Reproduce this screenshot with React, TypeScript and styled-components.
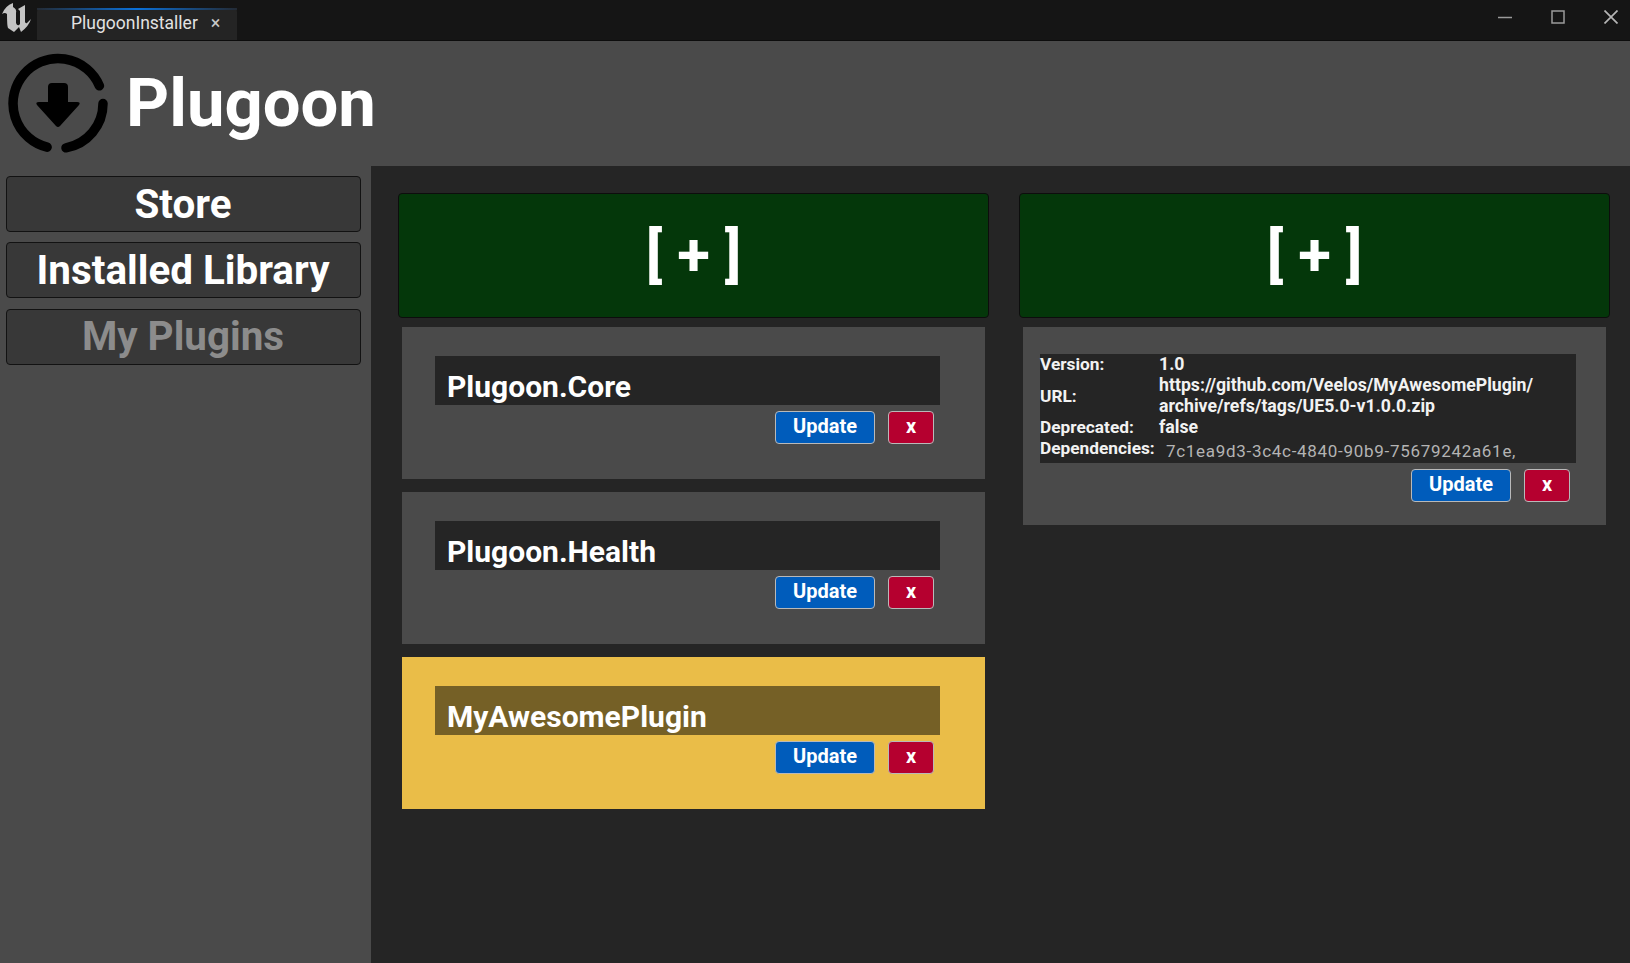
import * as React from "react";
import styled, { createGlobalStyle } from "styled-components";

const GlobalStyle = createGlobalStyle`
  html, body {
    margin: 0;
    padding: 0;
    height: 100%;
    overflow: hidden;
    background: #4a4a4a;
    font-family: Roboto, "Liberation Sans", sans-serif;
  }
  #root {
    height: 100%;
  }
`;

const Page = styled.div`
  display: flex;
  flex-direction: column;
  width: 1630px;
  height: 963px;
  overflow: hidden;
  background: #4a4a4a;
`;

const TitleBar = styled.div`
  display: flex;
  align-items: flex-end;
  height: 40px;
  flex: none;
  background: #151515;
  border-bottom: 1px solid #0c0c0c;
`;

const LogoSlot = styled.div`
  width: 37px;
  height: 40px;
  flex: none;
`;

const Tab = styled.div`
  display: flex;
  align-items: center;
  width: 200px;
  height: 32px;
  box-sizing: border-box;
  padding: 0 0 5px 34px;
  background: #242424;
  border-radius: 4px 4px 0 0;
  border-top: 2px solid transparent;
  border-image: linear-gradient(90deg, #242a33, #0a70d8 50%, #242a33) 1;
  border-left: 0;
  border-right: 0;
  border-bottom: 0;
  color: #e2e2e2;
  font-size: 17.5px;
`;

const TabClose = styled.span`
  margin-left: 13px;
  font-size: 18px;
  color: #c8c8c8;
`;

const WindowButtons = styled.div`
  display: flex;
  align-items: center;
  gap: 39px;
  margin-left: auto;
  height: 34px;
  align-self: flex-start;
  padding-right: 12px;
  color: #9a9a9a;
`;

const Header = styled.header`
  display: flex;
  align-items: center;
  gap: 17px;
  height: 125px;
  flex: none;
  padding-left: 6px;
  box-sizing: border-box;
`;

const Brand = styled.h1`
  margin: 0;
  color: #fff;
  font-size: 67px;
  font-weight: 700;
  line-height: 1;
`;

const Body = styled.div`
  display: flex;
  flex: 1;
  min-height: 0;
`;

const Sidebar = styled.nav`
  display: flex;
  flex-direction: column;
  gap: 10.4px;
  width: 371px;
  flex: none;
  box-sizing: border-box;
  padding: 10px 10px 0 6px;
`;

const NavButton = styled.div<{ $dim?: boolean }>`
  display: flex;
  align-items: center;
  justify-content: center;
  height: 56px;
  box-sizing: border-box;
  padding-right: 1px;
  background: #383838;
  border: 1px solid #121212;
  border-radius: 4px;
  color: ${(p) => (p.$dim ? "#8c8c8c" : "#fff")};
  font-size: 40.4px;
  font-weight: 700;
`;

const Main = styled.main`
  flex: 1;
  display: grid;
  grid-template-columns: 591px 591px;
  column-gap: 30px;
  align-items: start;
  padding: 27px 0 0 27px;
  background: #252525;
`;

const Column = styled.div`
  display: flex;
  flex-direction: column;
`;

const AddButton = styled.div`
  display: flex;
  align-items: center;
  justify-content: center;
  height: 125px;
  box-sizing: border-box;
  margin-bottom: 9px;
  padding-bottom: 3px;
  background: #04370a;
  border: 1px solid #0d0d0d;
  border-radius: 4px;
  color: #fff;
  font-size: 60px;
  font-weight: 700;
`;

const Card = styled.section<{ $selected?: boolean }>`
  margin: 0 4px 13px;
  height: 152px;
  box-sizing: border-box;
  padding: 29px 15px 0 33px;
  background: ${(p) => (p.$selected ? "#eabd48" : "#4a4a4a")};
`;

const DetailCard = styled(Card)`
  height: 198px;
  padding: 27px 36px 0 17px;
`;

const NameBar = styled.div<{ $selected?: boolean }>`
  height: 49px;
  margin-right: 30px;
  box-sizing: border-box;
  padding-left: 12px;
  background: ${(p) => (p.$selected ? "#756026" : "#252525")};
  color: #fff;
  font-size: 30px;
  font-weight: 700;
  line-height: 62px;
  overflow: hidden;
`;

const Actions = styled.div`
  display: flex;
  justify-content: flex-end;
  gap: 13px;
  margin: 6px 36px 0 0;
`;

const ActionButton = styled.div<{ $danger?: boolean }>`
  display: flex;
  align-items: center;
  justify-content: center;
  width: ${(p) => (p.$danger ? "46px" : "100px")};
  height: 33px;
  box-sizing: border-box;
  padding-bottom: 3px;
  background: ${(p) => (p.$danger ? "#b5002f" : "#005cbb")};
  border: 1px solid #b9b9b9;
  border-radius: 4px;
  color: #fff;
  font-size: 20px;
  font-weight: 700;
`;

const DetailTable = styled.div`
  display: grid;
  grid-template-columns: 119px 1fr;
  grid-auto-rows: 21px;
  width: 536px;
  height: 109px;
  background: #252525;
  color: #f2f2f2;
  font-size: 17.3px;
  font-weight: 700;
  line-height: 21px;
`;

const DetailLabel = styled.div<{ $tall?: boolean }>`
  grid-row: ${(p) => (p.$tall ? "span 2" : "auto")};
  align-self: center;
`;

const DetailValue = styled.div<{ $tall?: boolean }>`
  grid-row: ${(p) => (p.$tall ? "span 2" : "auto")};
  font-size: 17.7px;
  line-height: 21px;
  white-space: pre-line;
`;

const DependencyValue = styled.div`
  padding: 3px 0 0 7px;
  color: #b4b4b4;
  font-size: 17px;
  font-weight: 400;
  letter-spacing: 0.7px;
`;

const DetailActions = styled(Actions)`
  margin-right: 0;
`;

const UnrealLogo = () => (
  <svg width="33" height="34" viewBox="0 0 33 34">
    <path
      fill="#c4c4c4"
      d="M2 14 Q5 6 13 3 L13 7 Q17 9 16 13 L16 23 Q17 26 19 25 L20 24 L20 11 L18 9 L25 5 L25 22 Q26 24 27 23 L31 19 Q29 26 21 32 L19 27 L14 32 L8 28 Q7 26 7 14 Q5 12 2 14 Z"
    />
  </svg>
);

const PlugoonLogo = () => (
  <svg width="103" height="102" viewBox="0 0 103 102">
    <g fill="none" stroke="#000" strokeWidth="9.5" strokeLinecap="round">
      <path d="M41.1 94.2 A45 45 0 1 1 93.4 32.8" />
      <path d="M60 94.8 A45 45 0 0 0 97 50.5" />
    </g>
    <path
      fill="#000"
      d="M42 34 Q42 30 46 30 H58 Q62 30 62 34 V49 H71 Q75 49 73 52 L54 73 Q52 75 50 73 L31 52 Q29 49 33 49 H42 Z"
    />
  </svg>
);

const pluginNames = ["Plugoon.Core", "Plugoon.Health", "MyAwesomePlugin"];

const App = () => {
  return (
    <Page>
      <GlobalStyle />
      <TitleBar>
        <LogoSlot>
          <UnrealLogo />
        </LogoSlot>
        <Tab>
          PlugoonInstaller
          <TabClose>×</TabClose>
        </Tab>
        <WindowButtons>
          <svg width="14" height="14" viewBox="0 0 14 14">
            <path d="M0 7.5 H14" stroke="currentColor" strokeWidth="1.5" />
          </svg>
          <svg width="14" height="14" viewBox="0 0 14 14">
            <rect x="1" y="1" width="12" height="12" fill="none" stroke="currentColor" strokeWidth="1.5" />
          </svg>
          <svg width="14" height="14" viewBox="0 0 14 14">
            <path d="M0.5 0.5 L13.5 13.5 M13.5 0.5 L0.5 13.5" stroke="#b5b5b5" strokeWidth="1.7" />
          </svg>
        </WindowButtons>
      </TitleBar>
      <Header>
        <PlugoonLogo />
        <Brand>Plugoon</Brand>
      </Header>
      <Body>
        <Sidebar>
          <NavButton>Store</NavButton>
          <NavButton>Installed Library</NavButton>
          <NavButton $dim>My Plugins</NavButton>
        </Sidebar>
        <Main>
          <Column>
            <AddButton>[ + ]</AddButton>
            {pluginNames.map((name, i) => (
              <Card key={name} $selected={i === 2}>
                <NameBar $selected={i === 2}>{name}</NameBar>
                <Actions>
                  <ActionButton>Update</ActionButton>
                  <ActionButton $danger>x</ActionButton>
                </Actions>
              </Card>
            ))}
          </Column>
          <Column>
            <AddButton>[ + ]</AddButton>
            <DetailCard>
              <DetailTable>
                <DetailLabel>Version:</DetailLabel>
                <DetailValue>1.0</DetailValue>
                <DetailLabel $tall>URL:</DetailLabel>
                <DetailValue $tall>
                  {"https://github.com/Veelos/MyAwesomePlugin/\narchive/refs/tags/UE5.0-v1.0.0.zip"}
                </DetailValue>
                <DetailLabel>Deprecated:</DetailLabel>
                <DetailValue>false</DetailValue>
                <DetailLabel>Dependencies:</DetailLabel>
                <DependencyValue>7c1ea9d3-3c4c-4840-90b9-75679242a61e,</DependencyValue>
              </DetailTable>
              <DetailActions>
                <ActionButton>Update</ActionButton>
                <ActionButton $danger>x</ActionButton>
              </DetailActions>
            </DetailCard>
          </Column>
        </Main>
      </Body>
    </Page>
  );
};

export default App;
